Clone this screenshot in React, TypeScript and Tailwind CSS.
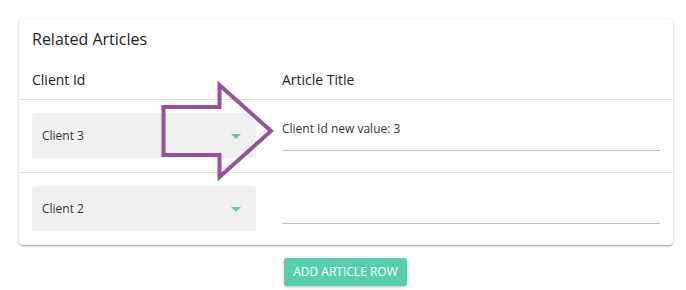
import React from "react";

type Row = { client: string; title: string };

const rows: Row[] = [
  { client: "Client 3", title: "Client Id new value: 3" },
  { client: "Client 2", title: "" },
];

function ClientSelect({ value }: { value: string }) {
  return (
    <div className="w-[224px] h-[45px] bg-[#f1f1f1] rounded-t-[4px] flex items-center justify-between pl-[10px] pr-[15px]">
      <span className="text-[12px] leading-4 text-[#333]">{value}</span>
      <svg width="10" height="5" viewBox="0 0 10 5" className="mt-[1px]">
        <path d="M0 0 L10 0 L5 5 Z" fill="#57cfa9" />
      </svg>
    </div>
  );
}

function TitleField({ value }: { value: string }) {
  return (
    <div className="h-[38px] border-b border-[#c2c2c2] pt-[2px]">
      <span className="text-[12px] leading-4 text-[#333]">{value}</span>
    </div>
  );
}

export default function App() {
  return (
    <div
      className="relative w-[686px] h-[290px] bg-white pt-[19px] px-[19px]"
      style={{ fontFamily: '"Open Sans", "Noto Sans", sans-serif' }}
    >
      {/* Card */}
      <div className="w-[654px] bg-white rounded-[4px] pt-2 shadow-[0_1px_3px_rgba(0,0,0,0.2),0_1px_1px_rgba(0,0,0,0.14),0_2px_1px_-1px_rgba(0,0,0,0.12)]">
        <h2 className="px-[13px] h-6 text-[16px] leading-6 text-[#222]">Related Articles</h2>

        {/* Header */}
        <div className="flex pt-[19px] pb-[9px] border-b border-[#e0e0e0] text-[14px] leading-5 text-[#222]">
          <div className="w-[250px] px-[13px]">Client Id</div>
          <div className="flex-1 px-[13px]">Article Title</div>
        </div>

        {/* Rows */}
        {rows.map((row, i) => (
          <div
            key={i}
            className={`flex pt-[13px] pb-[14px] ${i < rows.length - 1 ? "border-b border-[#e0e0e0]" : ""}`}
          >
            <div className="w-[250px] px-[13px]">
              <ClientSelect value={row.client} />
            </div>
            <div className="flex-1 px-[13px]">
              <TitleField value={row.title} />
            </div>
          </div>
        ))}
      </div>

      {/* Actions */}
      <div className="w-[654px] flex justify-center pt-[13px]">
        <button className="w-[123px] h-[28px] ml-[-1px] bg-[#57cfac] text-white text-[12px] leading-4 uppercase rounded-[3px] shadow-[0_1px_3px_rgba(0,0,0,0.25)]">
          Add Article Row
        </button>
      </div>

      {/* Annotation arrow */}
      <svg
        className="absolute left-0 top-0 pointer-events-none"
        width="686"
        height="290"
        viewBox="0 0 686 290"
      >
        <polygon
          points="163.5,107 219.5,107 219.5,85 271,131 219.5,177 219.5,155 163.5,155"
          fill="none"
          stroke="#9b4f9f"
          strokeWidth="4"
          strokeLinejoin="miter"
        />
      </svg>
    </div>
  );
}
